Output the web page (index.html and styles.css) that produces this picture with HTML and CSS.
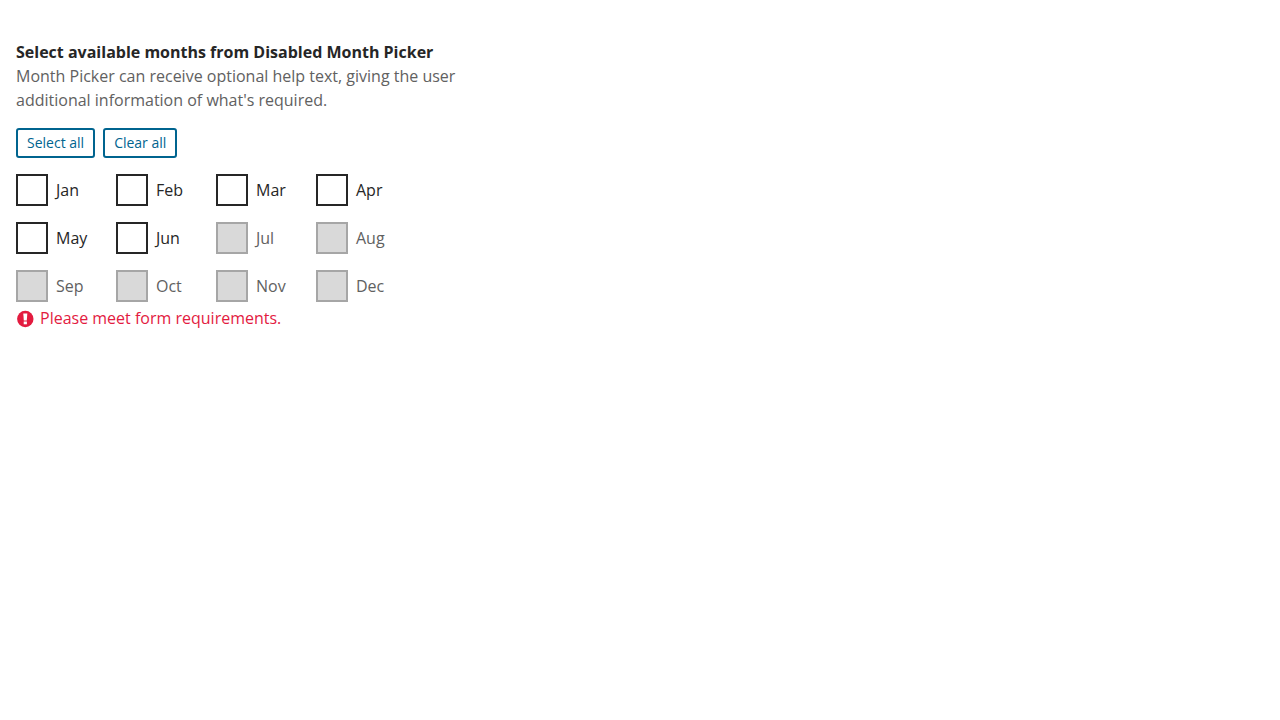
FILE: index.html
```html
<!DOCTYPE html>
<html lang="en">
<head>
<meta charset="utf-8">
<meta name="viewport" content="width=device-width, initial-scale=1">
<title>Month Picker</title>
<link rel="stylesheet" href="styles.css">
</head>
<body>
<fieldset class="picker" aria-describedby="hint error">
  <legend class="legend">Select available months from Disabled Month Picker</legend>
  <p class="hint" id="hint">Month Picker can receive optional help text, giving the user additional information of what's required.</p>
  <div class="actions">
    <button class="button" type="button">Select all</button>
    <button class="button" type="button">Clear all</button>
  </div>
  <div class="months">
    <div class="choice"><input class="box" type="checkbox" id="jan"><label class="label" for="jan">Jan</label></div>
    <div class="choice"><input class="box" type="checkbox" id="feb"><label class="label" for="feb">Feb</label></div>
    <div class="choice"><input class="box" type="checkbox" id="mar"><label class="label" for="mar">Mar</label></div>
    <div class="choice"><input class="box" type="checkbox" id="apr"><label class="label" for="apr">Apr</label></div>
    <div class="choice"><input class="box" type="checkbox" id="may"><label class="label" for="may">May</label></div>
    <div class="choice"><input class="box" type="checkbox" id="jun"><label class="label" for="jun">Jun</label></div>
    <div class="choice"><input class="box" type="checkbox" id="jul" disabled><label class="label" for="jul">Jul</label></div>
    <div class="choice"><input class="box" type="checkbox" id="aug" disabled><label class="label" for="aug">Aug</label></div>
    <div class="choice"><input class="box" type="checkbox" id="sep" disabled><label class="label" for="sep">Sep</label></div>
    <div class="choice"><input class="box" type="checkbox" id="oct" disabled><label class="label" for="oct">Oct</label></div>
    <div class="choice"><input class="box" type="checkbox" id="nov" disabled><label class="label" for="nov">Nov</label></div>
    <div class="choice"><input class="box" type="checkbox" id="dec" disabled><label class="label" for="dec">Dec</label></div>
  </div>
  <p class="error" id="error">
    <svg class="error-icon" viewBox="0 0 18 18" aria-hidden="true"><circle cx="9.300" cy="9" r="8.200" fill="currentColor"/><path fill="#fff" d="M7.300 3.500h4l-.5 7H7.800z"/><path fill="#fff" d="M7.700 11.500h3.200v2.800H7.700z"/></svg>
    <span>Please meet form requirements.</span>
  </p>
</fieldset>
</body>
</html>
```
FILE: styles.css
```css
body {
  margin: 0;
  padding: 40px 16px;
  background: #fff;
  color: #262626;
  font: 16px/24px "Open Sans", sans-serif;
}
.picker {
  max-width: 460px;
  min-width: 0;
  margin: 0;
  padding: 0;
  border: 0;
}
.legend {
  padding: 0;
  font-weight: 700;
}
.hint {
  margin: 0 0 16px;
  color: #616161;
}
.actions {
  display: flex;
  flex-wrap: wrap;
  gap: 8px;
  margin-bottom: 16px;
}
.button {
  padding: 3px 9px;
  border: 2px solid #00648f;
  border-radius: 3px;
  background: #fff;
  color: #00648f;
  font: 14px/20px "Open Sans", sans-serif;
  cursor: pointer;
}
.months {
  display: grid;
  grid-template-columns: repeat(auto-fill, 100px);
  gap: 16px 0;
}
.choice {
  display: flex;
  align-items: center;
  gap: 8px;
}
.box {
  appearance: none;
  box-sizing: border-box;
  flex: none;
  width: 32px;
  height: 32px;
  margin: 0;
  border: 2px solid #262626;
  background: #fff;
}
.box:checked {
  background: #262626;
}
.box:disabled {
  border-color: #a6a6a6;
  background: #d9d9d9;
}
.box:disabled + .label {
  color: #616161;
}
.error {
  display: flex;
  gap: 6px;
  margin: 4px 0 0;
  color: #e31b3f;
}
.error-icon {
  flex: none;
  width: 18px;
  height: 18px;
  margin-top: 4px;
}
```
